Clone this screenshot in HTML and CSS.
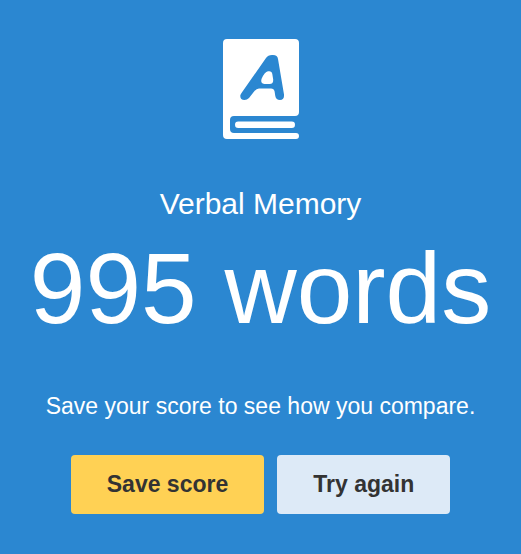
FILE: index.html
```html
<!DOCTYPE html>
<html lang="en">
<head>
<meta charset="utf-8">
<meta name="viewport" content="width=device-width, initial-scale=1">
<title>Verbal Memory</title>
<link rel="stylesheet" href="styles.css">
</head>
<body>
<main class="result">
  <svg class="result-icon" viewBox="0 0 76 100" aria-hidden="true">
    <path fill="#fff" d="M4 0H72a4 4 0 0 1 4 4V73a4 4 0 0 1-4 4H11a4 4 0 0 0-4 4v9a4 4 0 0 0 4 4H73a3 3 0 0 1 0 6H4a4 4 0 0 1-4-4V4a4 4 0 0 1 4-4Z"/>
    <rect fill="#fff" x="12" y="82.500" width="60" height="6.500" rx="3.250"/>
    <path fill="#2b87d1" d="M49 16H50Q54.500 16 55 20L61 55.500Q61.500 61 57 61Q53 61 52.300 57L51.600 52.500Q51 49.500 48 49.500H36Q33.500 49.500 31.500 52L26 59Q24 61 21.500 61Q17 61 17.300 56.500Q17.400 55.500 18.500 54L43 19Q45 16 49 16Z"/>
    <path fill="#fff" d="M45 32.300Q48.700 31.500 49.300 35L50.200 40.500Q50.500 45 46.500 45H41.500Q37.200 44.500 38.500 40Q41.500 33 45 32.300Z"/>
  </svg>
  <h2 class="result-title">Verbal Memory</h2>
  <h1 class="result-score">995 words</h1>
  <p class="result-hint">Save your score to see how you compare.</p>
  <div class="result-actions">
    <button class="button button-primary" type="button">Save score</button>
    <button class="button button-secondary" type="button">Try again</button>
  </div>
</main>
</body>
</html>
```
FILE: styles.css
```css
body {
  margin: 0;
  background: #2b87d1;
  color: #fff;
  font-family: "Liberation Sans", Arial, sans-serif;
}

.result {
  display: flex;
  flex-direction: column;
  align-items: center;
  padding: 39px 16px 40px;
  text-align: center;
}

.result-icon {
  width: 76px;
  height: 100px;
}

.result-title {
  margin: 47px 0 0;
  font-size: 30px;
  font-weight: 400;
  line-height: 36px;
}

.result-score {
  margin: 10px 0 0;
  font-size: 100px;
  font-weight: 400;
  line-height: 112px;
}

.result-hint {
  margin: 47px 0 0;
  font-size: 23px;
  line-height: 30px;
}

.result-actions {
  display: flex;
  flex-wrap: wrap;
  justify-content: center;
  gap: 13px;
  margin-top: 34px;
}

.button {
  padding: 15px 36px;
  border: 0;
  border-radius: 4px;
  color: #333;
  font-family: inherit;
  font-size: 23px;
  font-weight: 700;
  line-height: 29px;
  cursor: pointer;
}

.button-primary {
  background: #ffd154;
}

.button-secondary {
  background: #ddeaf7;
}
```
